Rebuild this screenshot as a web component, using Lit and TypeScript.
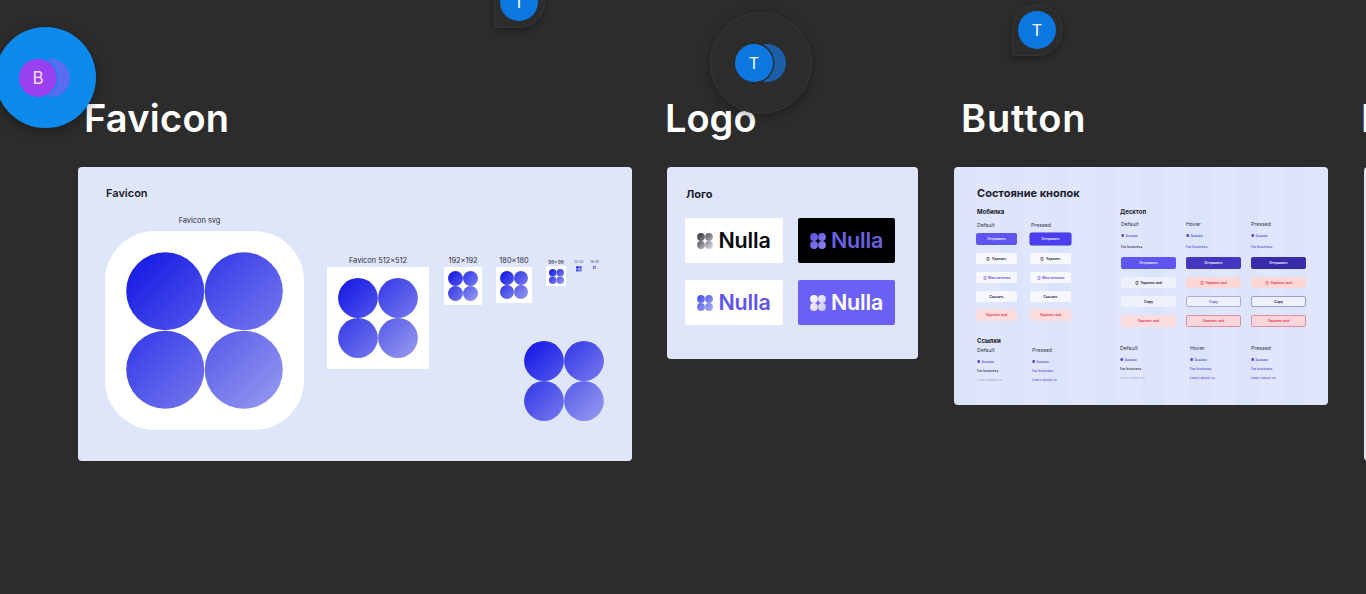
import { LitElement, html, css, svg } from "lit";
import { customElement } from "lit/decorators.js";

let uid = 0;
function flower(size: number, from: string, to: string, gap = 0) {
  const id = `g${uid++}`;
  const r = 19.9 - gap;
  return html`<svg class="flower" width=${size} height=${size} viewBox="0 0 80 80">
    <defs><linearGradient id=${id} x1="0.08" y1="0.08" x2="0.95" y2="0.95">
      <stop offset="0" stop-color=${from}></stop><stop offset="1" stop-color=${to}></stop>
    </linearGradient></defs>
    ${svg`<mask id="${id}m"><g fill="#fff">
      <circle cx="20" cy="20" r=${r}></circle><circle cx="60" cy="20" r=${r}></circle>
      <circle cx="20" cy="60" r=${r}></circle><circle cx="60" cy="60" r=${r}></circle></g></mask>
      <rect width="80" height="80" fill="url(#${id})" mask="url(#${id}m)"></rect>`}
  </svg>`;
}
const fav = (size: number) => flower(size, "#1a1fe6", "#9296ee");

const trash = html`<svg class="ic" viewBox="0 0 8 8" fill="none" stroke="currentColor" stroke-width="1"><path d="M1 1.5h6M2 1.5V7h4V1.5M3 1h2"></path></svg>`;
const doc = html`<svg class="ic" viewBox="0 0 8 8" fill="none" stroke="currentColor" stroke-width="1"><path d="M2 1h4v6H2zM3.2 4h1.6"></path></svg>`;

@customElement("app-root")
export class AppRoot extends LitElement {
  static styles = css`
    :host { display: block; width: 1366px; height: 594px; overflow: hidden; position: relative; background: #2c2c2c; font-family: Inter, "Noto Sans", sans-serif; color: #1a1c2e; }
    .canvas { display: flex; align-items: flex-start; }
    .section { display: flex; flex-direction: column; flex: none; }
    .s-fav { width: 554px; margin-left: 78px; margin-right: 35px; }
    .s-logo { width: 251px; margin-right: 36px; }
    .s-btn { width: 374px; margin-right: 36px; }
    .s-next { width: 200px; }
    h1 { margin: 96px 0 0; height: 71px; font-size: 38px; line-height: 44px; font-weight: 600; color: #fff; white-space: nowrap; }
    .s-fav h1 { padding-left: 6px; letter-spacing: 0.25px; }
    .s-logo h1 { margin-left: -2px; }
    .s-btn h1 { padding-left: 7px; letter-spacing: 0.9px; }
    .s-next h1 { margin-left: -3px; }
    .card { background: #e0e6fa; border-radius: 4px; }
    .flower { display: block; flex: none; }
    /* favicon */
    .c-fav { height: 294px; padding: 20px 0 0 27px; box-sizing: border-box; }
    .c-fav > .h2 { padding-left: 1px; }
    .h2 { font-size: 11px; line-height: 13px; font-weight: 600; color: #191b2c; }
    .fav-body { display: flex; }
    .col { display: flex; flex-direction: column; align-items: center; }
    .lbl { font-size: 7.4px; line-height: 10px; color: #2a2c3c; white-space: nowrap; }
    .fav-svg { width: 199px; margin-top: 16px; }
    .fav-svg .lbl { padding-right: 10px; }
    .fav-svg .tile { width: 199px; height: 199px; margin-top: 5px; border-radius: 50px; }
    .tile { background: #fff; display: flex; align-items: center; justify-content: center; }
    .fav-right { display: flex; flex-direction: column; margin-left: 23px; padding-top: 56px; width: 277px; }
    .fav-row { display: flex; align-items: flex-start; height: 85px; }
    .c512 .tile { width: 102px; height: 102px; margin-top: 1px; }
    .c192 { margin-left: 15px; } .c192 .tile { width: 38px; height: 38px; margin-top: 1px; }
    .c180 { margin-left: 14px; } .c180 .tile { width: 36px; height: 36px; margin-top: 1px; }
    .c96 { margin-left: 14px; margin-top: 3px; } .c96 .tile { width: 20px; height: 20px; }
    .c96 .lbl { font-size: 5px; line-height: 7px; }
    .c32 { margin-left: 8px; margin-top: 4px; } .c16 { margin-left: 7px; margin-top: 4px; }
    .c32 .lbl, .c16 .lbl { font-size: 3px; line-height: 5px; color: #44465a; }
    .c32 .flower, .c16 .flower { margin-top: 1px; }
    .big-wrap { display: flex; justify-content: flex-end; }
    /* logo */
    .c-logo { height: 192px; padding: 21px 23px 0 18px; box-sizing: border-box; }
    .c-logo .h2 { font-weight: 700; padding-left: 1px; }
    .logos { display: grid; grid-template-columns: 98px 97px; column-gap: 15px; row-gap: 17px; margin-top: 17px; }
    .logo { height: 45px; border-radius: 2px; display: flex; align-items: center; justify-content: center; gap: 5px; background: #fff; font-size: 21.5px; font-weight: 600; line-height: 1; letter-spacing: -0.2px; box-sizing: border-box; }
    .l1 { color: #0b0b0f; } .l2 { background: #000; color: #6a60e0; } .l3 { color: #5f55e8; } .l4 { background: #6a60f5; color: #fff; }
    /* buttons */
    .c-btn { height: 238px; padding: 20px 0 0 23px; box-sizing: border-box; display: flex; flex-wrap: wrap; align-content: flex-start;
      background: repeating-linear-gradient(90deg, #dce4fb 0 22px, #e0e7fc 22px 47px); }
    .c-btn .h2 { width: 100%; font-weight: 700; font-size: 11px; }
    .b-left { width: 143px; }
    .b-right { width: 190px; }
    .sub { font-size: 6px; line-height: 8px; font-weight: 700; color: #14162a; margin-top: 8px; }
    .sub.links { margin-top: 16px; }
    .t { font-size: 5.2px; line-height: 7px; color: #33354a; white-space: nowrap; }
    .grid { display: grid; }
    .g-mob { grid-template-columns: 54px 42px; grid-template-rows: 11.5px 20px 19px 19px 18px 12px; margin: 5.5px 0 0 -1px; }
    .g-mob .t { padding-left: 1px; }
    .g-mlink { grid-template-columns: 55px 42px; grid-template-rows: 11px 9px 9px 9px; margin-top: 1.5px; }
    .g-deskt { grid-template-columns: 65px 65px 56px; grid-template-rows: 10.5px 9px 13px; margin: 4.5px 0 0 1px; }
    .g-deskb { grid-template-columns: 65px 65px 56px; grid-template-rows: 20px 19px 19px 12px; margin: 4px 0 0 1px; }
    .g-dlink { grid-template-columns: 70px 61px 50px; grid-template-rows: 11px 9px 9.5px 8px; margin-top: 17.5px; }
    .b { box-sizing: border-box; border-radius: 2px; display: flex; align-items: center; justify-content: center; gap: 1.5px; font-size: 3.5px; font-weight: 600; white-space: nowrap; }
    .m { width: 41px; height: 12px; } .d { width: 55px; height: 12px; }
    .prim { background: #5f55f0; color: #e8e6ff; }
    .prim2 { background: #4a3ef0; color: #e8e6ff; box-shadow: 0 0 0 0.5px #3a30c0; }
    .prim3 { background: #4337bf; color: #e8e6ff; }
    .prim4 { background: #372ca8; color: #e8e6ff; }
    .white { background: #f7f8fe; color: #22243a; height: 11px; }
    .indigo { background: #f7f8fe; color: #5f55e0; height: 11px; }
    .soft { background: #eef0fb; color: #22243a; height: 11px; }
    .softb { background: #eef0fb; color: #6a62e0; border: 1px solid #a9aee2; height: 11px; }
    .softb2 { background: #eef0fb; color: #2a2a6a; border: 1px solid #9a9ed6; height: 11px; }
    .pink { background: #fbdcdf; color: #e0365f; }
    .pinkb { background: #fbd6da; color: #e0365f; border: 1px solid #de8ea8; }
    .pinks { background: #fbd8d6; color: #e0365f; height: 11px; }
    .ic { width: 4px; height: 4px; flex: none; }
    .lk { font-size: 3.5px; line-height: 6px; font-weight: 500; white-space: nowrap; align-self: center; }
    .lk-b { color: #4a42d0; } .lk-k { color: #1a1c2e; } .lk-g { color: #a9aed0; } .lk-p { color: #5f55e8; }
    /* next */
    .c-next { height: 294px; }
    /* cursors */
    .cur { position: absolute; box-sizing: border-box; }
    .big { left: -5px; top: 27px; width: 101px; height: 101px; border-radius: 50%; background: #0d8bec; box-shadow: 0 3px 12px rgba(0,0,0,.35); }
    .ring { left: 710px; top: 12px; width: 102px; height: 102px; border-radius: 50%; background: #2c2c2c; border: 1px solid #383838; box-shadow: 0 3px 12px rgba(0,0,0,.3); }
    .pin { width: 51px; height: 52px; background: #2c2c2c; border-radius: 50% 50% 50% 2px; border: 1px solid #363636; box-shadow: 0 2px 6px rgba(0,0,0,.35); }
    .p1 { left: 1012px; top: 4px; } .p2 { left: 494px; top: -24px; }
    .ava { position: absolute; width: 38px; height: 38px; border-radius: 50%; display: flex; align-items: center; justify-content: center; font-size: 16px; color: #fff; background: #0a78e0; }
    .ava.front.dark { box-shadow: 0 0 0 1.5px #2c2c2c; }
    .ava.back { background: #1b5fa8; }
    .big .ava { background: #9b40f0; color: #efdcff; left: 24px; top: 32px; font-size: 17px; }
    .big .ava.front { box-shadow: 0 0 0 1.5px #0d8bec; }
    .big .ava.back { background: #5a6cf2; left: 37px; }
    .ring .ava { left: 24px; top: 31px; } .ring .ava.back { left: 37px; }
    .pin .ava { left: 5px; top: 6px; }
  `;

  private mobile() {
    return html`<div class="grid g-mob">
      <div class="t">Default</div><div class="t">Pressed</div>
      <div class="b m prim">Отправить</div><div class="b m prim2">Отправить</div>
      <div class="b m white">${trash}Удалить</div><div class="b m white">${trash}Удалить</div>
      <div class="b m indigo">${doc}Мои хотелки</div><div class="b m indigo">${doc}Мои хотелки</div>
      <div class="b m white">Скачать</div><div class="b m white">Скачать</div>
      <div class="b m pink">Удалить всё</div><div class="b m pink">Удалить всё</div>
    </div>`;
  }

  private links(cols: string[], cls: string) {
    return html`<div class="grid ${cls}">
      ${cols.map((c) => html`<div class="t">${c}</div>`)}
      ${cols.map(() => html`<div class="lk lk-b">● Знания</div>`)}
      ${cols.map((_, i) => html`<div class="lk ${i === 0 ? "lk-k" : "lk-b"}">For business</div>`)}
      ${cols.map((_, i) => html`<div class="lk ${i === 0 ? "lk-g" : "lk-p"}">Learn about us</div>`)}
    </div>`;
  }

  render() {
    return html`
      <div class="canvas">
        <section class="section s-fav">
          <h1>Favicon</h1>
          <div class="card c-fav">
            <div class="h2">Favicon</div>
            <div class="fav-body">
              <div class="col fav-svg"><div class="lbl">Favicon svg</div><div class="tile">${fav(157)}</div></div>
              <div class="fav-right">
                <div class="fav-row">
                  <div class="col c512"><div class="lbl">Favicon 512×512</div><div class="tile">${fav(80)}</div></div>
                  <div class="col c192"><div class="lbl">192×192</div><div class="tile">${fav(30)}</div></div>
                  <div class="col c180"><div class="lbl">180×180</div><div class="tile">${fav(28)}</div></div>
                  <div class="col c96"><div class="lbl">96×96</div><div class="tile">${fav(15)}</div></div>
                  <div class="col c32"><div class="lbl">32×32</div>${fav(6)}</div>
                  <div class="col c16"><div class="lbl">16×16</div>${fav(3)}</div>
                </div>
                <div class="big-wrap">${fav(80)}</div>
              </div>
            </div>
          </div>
        </section>
        <section class="section s-logo">
          <h1>Logo</h1>
          <div class="card c-logo">
            <div class="h2">Лого</div>
            <div class="logos">
              <div class="logo l1">${flower(16, "#3a3a44", "#d8d8e4", 0.5)}Nulla</div>
              <div class="logo l2">${flower(16, "#5f55e0", "#8a82f0", 0.5)}Nulla</div>
              <div class="logo l3">${flower(16, "#4a55e8", "#a6aaf4", 0.5)}Nulla</div>
              <div class="logo l4">${flower(16, "#ffffff", "#c8c4fa", 0.5)}Nulla</div>
            </div>
          </div>
        </section>
        <section class="section s-btn">
          <h1>Button</h1>
          <div class="card c-btn">
            <div class="h2">Состояние кнопок</div>
            <div class="b-left">
              <div class="sub">Мобилка</div>
              ${this.mobile()}
              <div class="sub links">Ссылки</div>
              ${this.links(["Default", "Pressed"], "g-mlink")}
            </div>
            <div class="b-right">
              <div class="sub">Десктоп</div>
              <div class="grid g-deskt">
                <div class="t">Default</div><div class="t">Hover</div><div class="t">Pressed</div>
                <div class="lk lk-b">● Знания</div><div class="lk lk-b">● Знания</div><div class="lk lk-b">● Знания</div>
                <div class="lk lk-k">For business</div><div class="lk lk-b">For business</div><div class="lk lk-b">For business</div>
              </div>
              <div class="grid g-deskb">
                <div class="b d prim">Отправить</div><div class="b d prim3">Отправить</div><div class="b d prim4">Отправить</div>
                <div class="b d soft">${trash}Удалить всё</div><div class="b d pinks">${trash}Удалить всё</div><div class="b d pinks">${trash}Удалить всё</div>
                <div class="b d soft">Copy</div><div class="b d softb">Copy</div><div class="b d softb2">Copy</div>
                <div class="b d pink">Удалить всё</div><div class="b d pinkb">Удалить всё</div><div class="b d pinkb">Удалить всё</div>
              </div>
              ${this.links(["Default", "Hover", "Pressed"], "g-dlink")}
            </div>
          </div>
        </section>
        <section class="section s-next"><h1>I</h1><div class="card c-next"></div></section>
      </div>
      <div class="cur big"><div class="ava back"></div><div class="ava front">B</div></div>
      <div class="cur ring"><div class="ava back"></div><div class="ava front dark">T</div></div>
      <div class="cur pin p1"><div class="ava">T</div></div>
      <div class="cur pin p2"><div class="ava">T</div></div>
    `;
  }
}
